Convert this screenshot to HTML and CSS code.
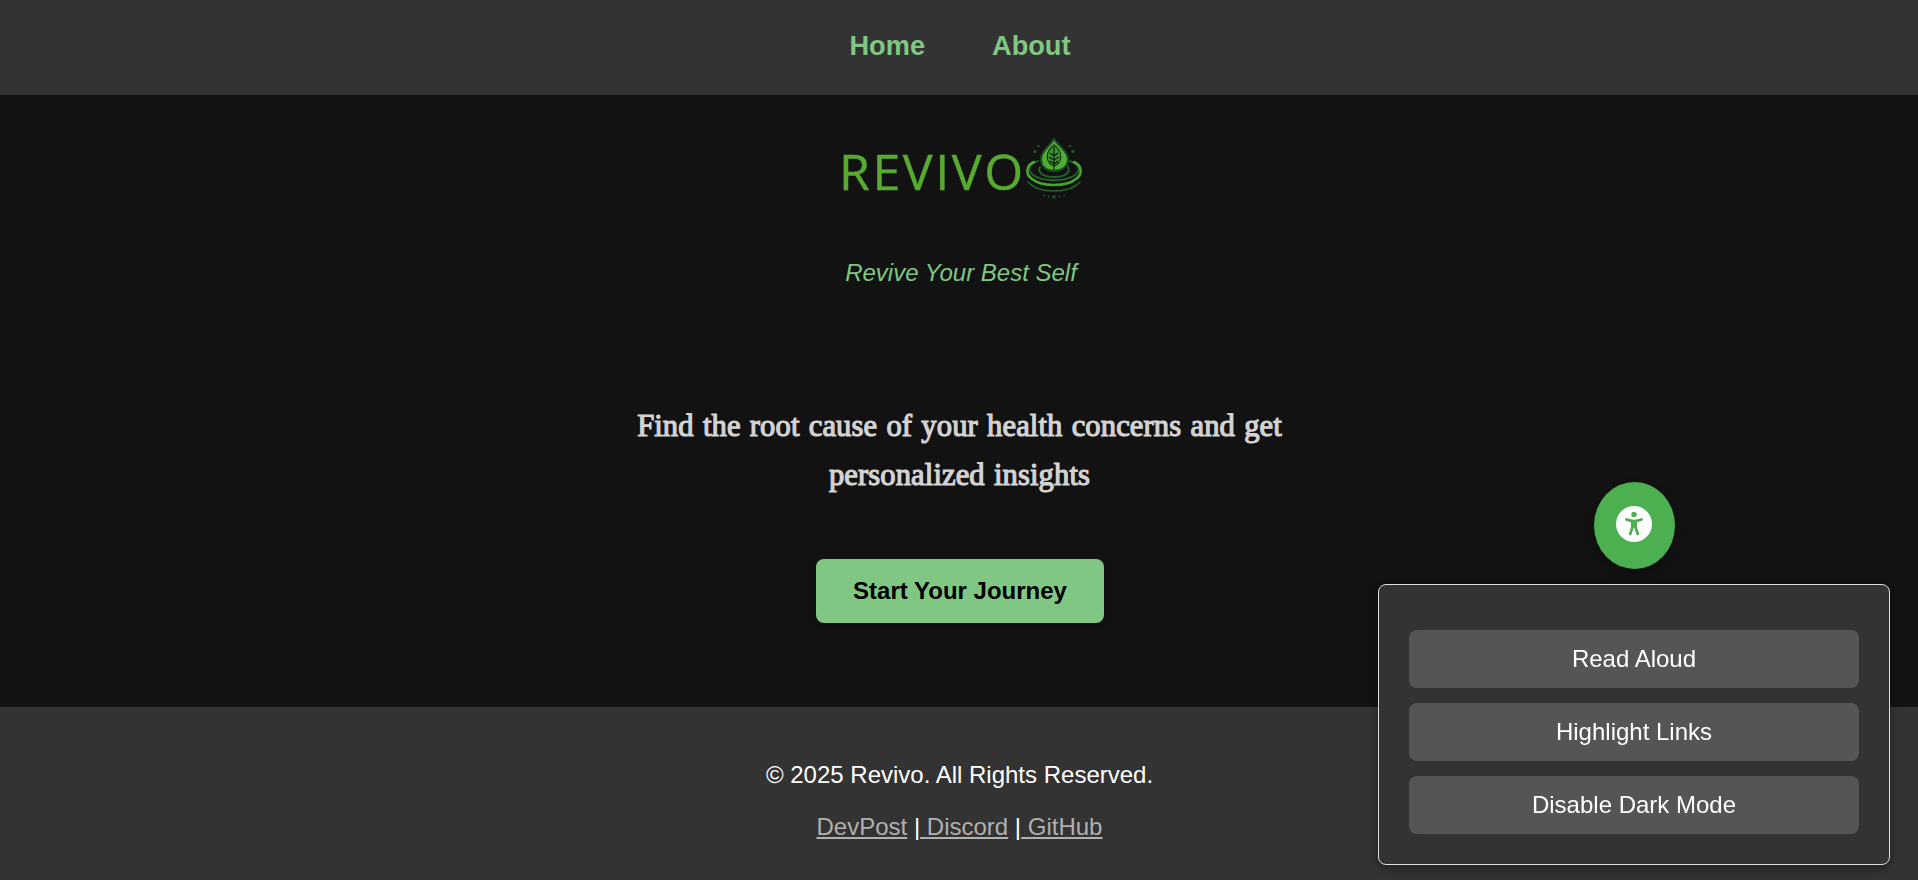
FILE: index.html
```
<!DOCTYPE html>
<html lang="en">
<head>
    <meta charset="UTF-8">
    <meta name="viewport" content="width=device-width, initial-scale=1.0">
    <title>Revivo</title>
    <link rel="stylesheet" href="styles.css">
</head>
<body>
    <header>
        <nav class="nav">
            <a href="#">Home</a>
            <a href="#">About</a>
        </nav>
    </header>

    <main>
        <svg class="logo" viewBox="0 0 270 90" role="img" aria-label="Revivo">
            <text class="logo-text" x="9" y="65">REVIVO</text>
            <!-- ripples -->
            <g fill="none" stroke-linecap="round">
                <path d="M208 36C197 40 198 46 203 50C212 57 236 57 245 50C250 46 251 40 240 36" stroke="#24652d" stroke-width="1.8"/>
                <path d="M210 42C207 48 214 52 224 52C234 52 241 48 238 42" stroke="#24652d" stroke-width="1.8"/>
                <path d="M204 37C195 41 196 50 202 54C212 62 236 62 246 54C252 50 253 41 244 37" stroke="#48a52f" stroke-width="2.6"/>
                <path d="M198 57C209 69 239 69 250 57" stroke="#24652d" stroke-width="1.7"/>
            </g>
            <!-- drop -->
            <path d="M224 14C220 21 211 26 211 34C211 42 217 46 224 46C231 46 238 42 238 34C238 26 228 21 224 14Z" fill="#4fae32" stroke="#1c4a28" stroke-width="2"/>
            <path d="M224 20C215 27 215 37 224 41C233 37 233 27 224 20Z" fill="#3d962f" stroke="#102616" stroke-width="1.1"/>
            <path d="M224 22V45M224 31L220 28M224 31L228 28M224 35L219 32M224 35L229 32M224 39L220 36M224 39L228 36" fill="none" stroke="#101c12" stroke-width="1.2"/>
            <g fill="#1f5529">
                <circle cx="208.5" cy="21" r="1.3"/>
                <circle cx="205" cy="26.5" r="1.7"/>
                <circle cx="240" cy="21" r="1.3"/>
                <circle cx="243" cy="26.5" r="1.7"/>
                <circle cx="214" cy="70.5" r="1"/>
                <circle cx="218.5" cy="71.5" r="1"/>
                <circle cx="224" cy="72" r="1.8"/>
                <circle cx="229.5" cy="71.5" r="1"/>
                <circle cx="234" cy="70.5" r="1"/>
            </g>
        </svg>
        <p class="tagline">Revive Your Best Self</p>
        <h2 class="intro">Find the root cause of your health concerns and get <br>personalized insights</h2>
        <button class="start-btn">Start Your Journey</button>
    </main>

    <footer>
        <p>© 2025 Revivo. All Rights Reserved.</p>
        <p><a href="#">DevPost</a> |<a href="#"> Discord</a> |<a href="#"> GitHub</a></p>
    </footer>

    <div class="accessibility">
        <button class="toggle-btn" aria-label="Accessibility">
            <svg viewBox="0 0 36 36">
                <circle cx="18" cy="18" r="18" fill="#fff"/>
                <circle cx="18" cy="8.5" r="2.7" fill="#4caf50"/>
                <path d="M10.5 13.5Q18 16.5 25.5 13.5M16.5 16V21L14.2 28M19.5 16V21L21.8 28" fill="none" stroke="#4caf50" stroke-width="2.7" stroke-linecap="round" stroke-linejoin="round"/>
                <path d="M15.2 15H20.8V22H15.2Z" fill="#4caf50"/>
            </svg>
        </button>
        <div class="options">
            <button>Read Aloud</button>
            <button>Highlight Links</button>
            <button>Disable Dark Mode</button>
        </div>
    </div>
</body>
</html>
```
FILE: styles.css
```
* {
    box-sizing: border-box;
}
body {
    margin: 0;
    height: 100vh;
    display: flex;
    flex-direction: column;
    overflow: hidden;
    font-family: "Liberation Sans", Arial, sans-serif;
    font-size: 24px;
    background-color: #121212;
    color: #fff;
}
header {
    height: 95px;
    background-color: #333;
}
.nav {
    display: flex;
    justify-content: center;
    gap: 67px;
    padding-top: 30px;
    padding-left: 2px;
}
.nav a {
    color: #81c784;
    font-size: 27.2px;
    font-weight: bold;
    text-decoration: none;
}
main {
    height: 612px;
    display: flex;
    flex-direction: column;
    align-items: center;
}
.logo {
    width: 270px;
    height: 90px;
    margin-top: 30px;
    margin-left: 12px;
}
.logo-text {
    font-family: "Open Sans", sans-serif;
    font-size: 50px;
    letter-spacing: 2.6px;
    fill: #57ab30;
    stroke: #57ab30;
    stroke-width: 0.4px;
}
.tagline {
    margin: 44px 0 0;
    padding-left: 4px;
    font-style: italic;
    color: #81c784;
}
.intro {
    margin: 115px 0 0;
    padding-left: 1px;
    font-family: "Liberation Serif", serif;
    font-size: 30.6px;
    font-weight: normal;
    line-height: 49px;
    letter-spacing: 0.1px;
    word-spacing: 1.5px;
    text-align: center;
    color: #d3d3d3;
    -webkit-text-stroke: 1.2px #d3d3d3;
}
.start-btn {
    width: 288px;
    height: 64px;
    margin-top: 59px;
    margin-left: 2px;
    border: none;
    border-radius: 8px;
    font-family: inherit;
    font-size: 24px;
    font-weight: bold;
    color: #000;
    background-color: #81c784;
    box-shadow: 0 4px 6px rgba(0, 0, 0, 0.2);
    cursor: pointer;
}
footer {
    flex: 1;
    padding-top: 54px;
    padding-left: 1px;
    text-align: center;
    background-color: #333;
}
footer p {
    margin: 0 0 24px;
    line-height: 28px;
}
footer a {
    color: #b0b0b0;
}
.accessibility {
    position: fixed;
    right: 28px;
    bottom: 15px;
    width: 512px;
    display: flex;
    flex-direction: column;
    align-items: center;
    gap: 15px;
}
.toggle-btn {
    width: 81px;
    height: 87px;
    padding: 0 0 4px;
    border: none;
    border-radius: 50%;
    background-color: #4caf50;
    box-shadow: 0 4px 8px rgba(0, 0, 0, 0.3);
    cursor: pointer;
}
.toggle-btn svg {
    display: block;
    width: 36px;
    height: 36px;
    margin: 0 auto;
}
.options {
    width: 100%;
    display: flex;
    flex-direction: column;
    gap: 15px;
    padding: 45px 30px 30px;
    border: 1px solid #ddd;
    border-radius: 8px;
    background-color: #333;
    box-shadow: 0 4px 8px rgba(0, 0, 0, 0.3);
}
.options button {
    height: 58px;
    border: none;
    border-radius: 8px;
    font-family: inherit;
    font-size: 24px;
    color: #fff;
    background-color: #555;
    cursor: pointer;
}
```
